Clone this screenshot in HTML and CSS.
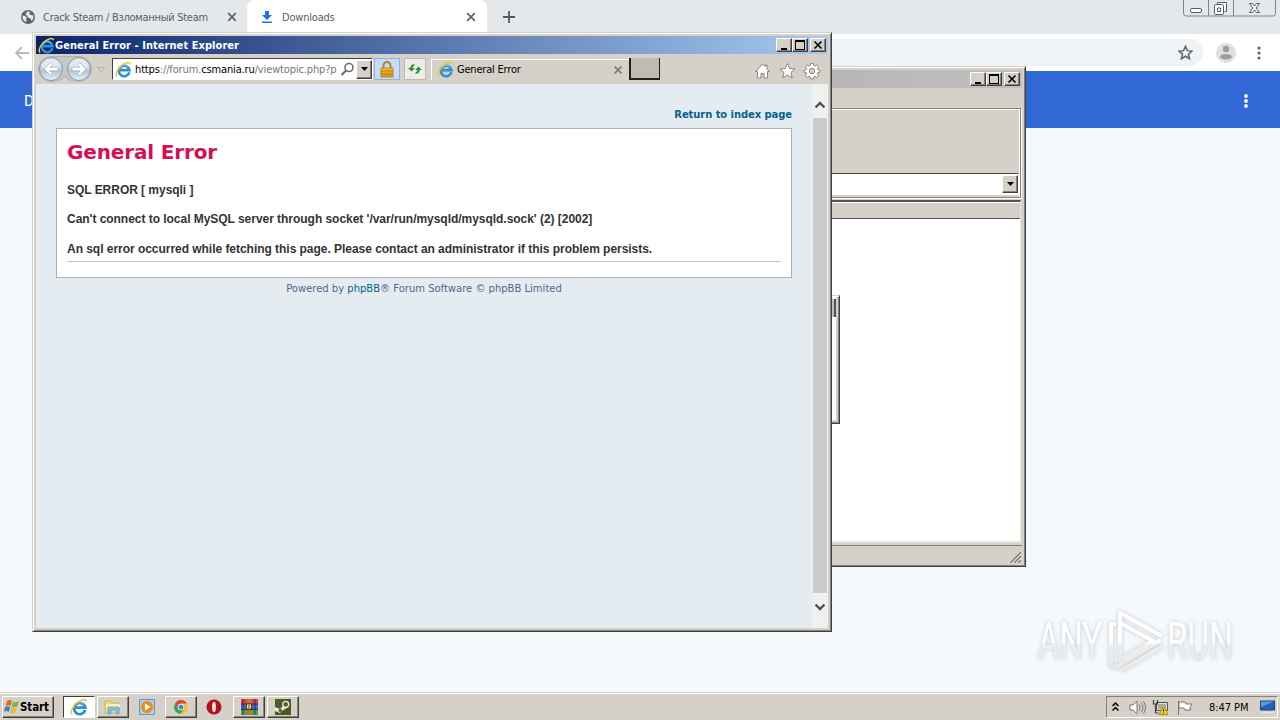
FILE: index.html
```
<!DOCTYPE html>
<html lang="en">
<head>
<meta charset="utf-8">
<title>Desktop</title>
<link rel="stylesheet" href="styles.css">
</head>
<body>
<svg class="defs" width="0" height="0">
  <defs>
    <linearGradient id="ball" x1="0" y1="0" x2="0" y2="1"><stop offset="0" stop-color="#dde2e8"/><stop offset=".45" stop-color="#c9d3dc"/><stop offset=".6" stop-color="#b2c5d2"/><stop offset="1" stop-color="#e4f8fd"/></linearGradient>
    <linearGradient id="gold" x1="0" y1="0" x2="0" y2="1"><stop offset="0" stop-color="#f5c044"/><stop offset="1" stop-color="#d8941e"/></linearGradient>
    <linearGradient id="mark" gradientUnits="userSpaceOnUse" x1="0" y1="6" x2="0" y2="66"><stop offset="0" stop-color="#fff"/><stop offset=".55" stop-color="#fdfefe"/><stop offset=".57" stop-color="#eceeef"/><stop offset="1" stop-color="#e6e8ea"/></linearGradient>
    <symbol id="ie" viewBox="0 0 16 16">
      <path d="M13.500 10.600A5 5 0 1 1 13.600 8.600H5" fill="none" stroke="#2f8fd6" stroke-width="2.500"/>
      <path d="M4 6.500A5 5 0 0 1 12.500 6" fill="none" stroke="#7fcdf4" stroke-width=".9"/>
      <path d="M2 14.700C-.5 12.500 3 6 8 3c3.600-2.200 6.500-2.200 6.500 0" fill="none" stroke="#f4c620" stroke-width="1.400"/>
    </symbol>
  </defs>
</svg>
<div class="desktop">
  <header class="tabs">
    <div class="tab first">
      <svg width="14" height="14" viewBox="0 0 14 14"><circle cx="7" cy="7" r="7" fill="#5f6368"/><path d="M1.500 5.500 4 6l2 2-1 1.500 .5 2.500C3 11.500 1 9 1.500 5.500zM6 1.500 9.500 2 8 4l2 1 2.400.5c.5 2-.4 4.500-2 5.500L9.500 8.500 7 7.500 6 5.500 4.500 5z" fill="#e4e8ea"/></svg>
      <span class="label crack">Crack Steam / Взломанный Steam</span>
      <svg class="close" width="10" height="10" viewBox="0 0 10 10"><path d="M1.200 1.200l7.600 7.600M8.800 1.200L1.200 8.800"/></svg>
    </div>
    <div class="tab active">
      <svg width="12" height="13" viewBox="0 0 12 13"><path d="M4 0h4v4h3L6 9 1 4h3zM1 10.500h10v1.500H1z" fill="#1a73e8"/></svg>
      <span class="label dl">Downloads</span>
      <svg class="close" width="10" height="10" viewBox="0 0 10 10"><path d="M1.200 1.200l7.600 7.600M8.800 1.200L1.200 8.800"/></svg>
    </div>
    <svg class="plus" width="12" height="12" viewBox="0 0 12 12"><path d="M6 0v12M0 6h12" stroke="#55595d" stroke-width="1.800"/></svg>
    <svg class="caption" width="94" height="18" viewBox="0 0 94 18" fill="none" stroke="#747a80">
      <path d="M.5 0v13q0 3 3 3h87q2 0 2-3V0M25.500 0v16M50.500 0v16" stroke="#81868a"/>
      <rect x="7.500" y="8.500" width="11" height="4" rx="1.500" stroke="#555b61" fill="#fff"/>
      <path d="M34.500 4.500V2.500h9v9h-2M31.500 5.500q0-1 1-1h7q1 0 1 1v8q0 1-1 1h-7q-1 0-1-1zM34.500 8h3v3.500h-3z" stroke="#555b61" fill="#fff"/>
      <path d="M66.500 3.500h3l2 2.500 2-2.500h3l-3.300 4.500 3.300 4.500h-3l-2-2.500-2 2.500h-3L69.800 8z" stroke="#555b61" fill="#fff"/>
    </svg>
  </header>
  <div class="omni">
    <svg width="14" height="14" viewBox="0 0 14 14"><path d="M14 7H1M7 1L1 7l6 6" fill="none" stroke="#b8babd" stroke-width="1.800"/></svg>
    <div class="url"><svg width="15" height="15" viewBox="0 0 24 24"><path d="M12 2l3 7 7.500.7-5.700 5 1.700 7.300L12 18l-6.500 4 1.700-7.300-5.700-5L9 9z" fill="none" stroke="#5f6368" stroke-width="2.400"/></svg></div>
    <svg class="person" width="20" height="20" viewBox="0 0 20 20"><circle cx="10" cy="10" r="10" fill="#dedfe0"/><circle cx="10" cy="6" r="3.200" fill="#9c9ea1"/><ellipse cx="10" cy="13.800" rx="6" ry="2.700" fill="#9c9ea1"/></svg>
    <svg class="kebab" width="4" height="14" viewBox="0 0 4 14" fill="#5f6368"><circle cx="2" cy="2" r="1.600"/><circle cx="2" cy="7" r="1.600"/><circle cx="2" cy="12" r="1.600"/></svg>
  </div>
  <div class="bluebar"><span>Downloads</span>
    <svg width="4" height="14" viewBox="0 0 4 14" fill="#fff"><circle cx="2" cy="2" r="1.900"/><circle cx="2" cy="7" r="1.900"/><circle cx="2" cy="12" r="1.900"/></svg>
  </div>
  <main class="wall"></main>
  <footer class="taskbar">
    <div class="start raised"><svg width="18" height="18" viewBox="0 0 18 18"><path d="M4 3q3-1.800 5 0L7.500 8q-2.500-1.500-5 0z" fill="#e4662a"/><path d="M10 3.500q3 1.500 6-.5l-1.600 5.200q-3 1.800-5.700.3z" fill="#80b73b"/><path d="M2.200 9q2.500-1.500 5 0L5.800 14q-2.300-1.700-5-.2z" fill="#3b7fd0"/><path d="M8.300 9.500q3 1.500 5.700-.3l-1.600 5.200q-2.700 1.700-5.500.1z" fill="#f0b82c"/></svg><b>Start</b></div>
    <div class="task pressed"><svg width="18" height="18"><use href="#ie"/></svg></div>
    <div class="task raised folder"><svg width="18" height="18" viewBox="0 0 18 18"><path d="M1 3h6l1 2h7v10H1z" fill="#f1d778" stroke="#cba84d" stroke-width=".7"/><path d="M2 6h14v4H2z" fill="#fff0a8"/><path d="M4 16V9h11v7h-3v-4H7v4z" fill="#79c3e8" stroke="#4b9cc9" stroke-width=".6"/></svg></div>
    <div class="bare media"><svg width="16" height="16" viewBox="0 0 16 16"><rect x=".5" y=".5" width="15" height="15" fill="#a8d0ec" stroke="#5b9bcf"/><circle cx="8" cy="8" r="6" fill="#f28b16"/><path d="M6 4.500l5.500 3.500L6 11.500z" fill="#fff"/></svg></div>
    <div class="task raised chrome"><svg width="14" height="14" viewBox="0 0 14 14"><circle cx="7" cy="7" r="7" fill="#f6c32b"/><path d="M1 3.400A7 7 0 0 1 13 3.500H7L4 8.500z" fill="#dd4937"/><path d="M1 3.400A7 7 0 0 0 6.500 14l3.200-5H4.200z" fill="#39a35a"/><circle cx="7" cy="7" r="3.200" fill="#fff"/><circle cx="7" cy="7" r="2.500" fill="#4588e8"/></svg></div>
    <div class="bare opera"><svg width="16" height="16" viewBox="0 0 16 16"><circle cx="8" cy="8" r="7.500" fill="#b60f18"/><ellipse cx="8" cy="8" rx="1.900" ry="5.300" fill="#f2e9e5"/></svg></div>
    <div class="task raised rar"><svg width="17" height="16" viewBox="0 0 17 16"><path d="M0 0h17v5H0z" fill="#d83a55"/><path d="M0 5h17v6H0z" fill="#3f66cc"/><path d="M0 11h17v5H0z" fill="#43a54e"/><path d="M5.500 0h5v16h-5z" fill="#bd7726"/><path d="M0 5h17M0 10.500h17M2 0v16M14 0v16" stroke="#37222e" stroke-width=".8"/><path d="M5.500 5h5v5h-5z" fill="#f4deb0" stroke="#5e3b18"/><path d="M8 6v3" stroke="#444"/></svg></div>
    <div class="task raised steam"><svg width="16" height="16" viewBox="0 0 16 16"><path d="M0 0h16v16H0z" fill="#4d5b24"/><path d="M0 8l5 2 4-4L13 8l-6 4-2 2-5-2z" fill="#e9ecdd"/><circle cx="10.700" cy="5.300" r="3" fill="#56642c" stroke="#e9ecdd" stroke-width="1.300"/><circle cx="5.300" cy="11.500" r="1.800" fill="#58652f"/></svg></div>
    <div class="tray">
      <svg width="7" height="10" viewBox="0 0 7 10"><path d="M.5 4l3-3 3 3M.5 8.500l3-3 3 3" fill="none" stroke="#000" stroke-width="1.500"/></svg>
      <svg class="speaker" width="17" height="15" viewBox="0 0 17 15" fill="#fff" stroke="#777"><path d="M1 5h3l4-4v13l-4-4H1z"/><path d="M10 4.500q2 3 0 6M12 2.500q4 5 0 10M14.500 1.500q4 6 0 12" fill="none"/></svg>
      <svg class="net" width="17" height="16" viewBox="0 0 17 16"><path d="M4.500 3.500h11v8h-11z" fill="#ddd" stroke="#555"/><path d="M6 5h8v5H6z" fill="#aaa8a0"/><path d="M1.500 1v4h4V1M3.500 5v9h3" fill="none" stroke="#444" stroke-width="1.200"/><path d="M11.500 7.500l4.500 8H7z" fill="#f5d21d" stroke="#b69200"/><path d="M11.500 10v2.500M11.500 13.500v1" stroke="#222"/></svg>
      <svg class="flag" width="16" height="15" viewBox="0 0 16 15"><path d="M1.500 1v14M2 2h6l1 2h6l-2 4 1 2H8L7 8H2z" fill="#fff" stroke="#777"/></svg>
      <span class="time">8:47 PM</span>
      <svg class="mon" width="15" height="14" viewBox="0 0 15 14"><path d="M.5 1h14v9H.5z" fill="#1f62ba" stroke="#1b416f"/><path d="M1 1.500h13L1 7z" fill="#5c9be2"/><path d="M1 12h10l3-1v2H1z" fill="#d9eaf6"/></svg>
    </div>
  </footer>

  <section class="win back">
    <div class="titlebar grey"><div class="btns">
      <i class="raised"><svg width="12" height="10" viewBox="0 0 12 10"><path d="M3 8h6v2H3z"/></svg></i><i class="raised"><svg width="12" height="10" viewBox="0 0 12 10"><path d="M1 0h10v10H1zM2 2v7h8V2z" fill-rule="evenodd"/></svg></i><i class="raised x"><svg width="12" height="10" viewBox="0 0 12 10"><path d="M2.500 1.500l7 7M9.500 1.500l-7 7" stroke="#000" stroke-width="1.700"/></svg></i>
    </div></div>
    <div class="menu"></div>
    <div class="rebar"><div class="combo"><i class="raised"><svg width="7" height="4"><path d="M0 0h7L3.500 4z"/></svg></i></div></div>
    <div class="list"><div class="head"></div></div>
    <div class="status"><svg width="13" height="13" viewBox="0 0 13 13"><path d="M1 13L13 1M5 13l8-8M9 13l4-4" stroke="#fff"/><path d="M2 13L13 2M6 13l7-7M10 13l3-3" stroke="#77736d" stroke-width="1.400"/></svg></div>
  </section>
  <section class="peek"><i></i></section>

  <section class="win front">
    <div class="titlebar blue"><svg width="17" height="17"><use href="#ie"/></svg><b class="ttl">General Error - Internet Explorer</b><div class="btns">
      <i class="raised"><svg width="12" height="10" viewBox="0 0 12 10"><path d="M3 8h6v2H3z"/></svg></i><i class="raised"><svg width="12" height="10" viewBox="0 0 12 10"><path d="M1 0h10v10H1zM2 2v7h8V2z" fill-rule="evenodd"/></svg></i><i class="raised x"><svg width="12" height="10" viewBox="0 0 12 10"><path d="M2.500 1.500l7 7M9.500 1.500l-7 7" stroke="#000" stroke-width="1.700"/></svg></i>
    </div></div>
    <div class="bar">
      <svg class="nav" width="70" height="28" viewBox="0 0 70 28"><path d="M15 1.500h28a12.500 12.500 0 0 1 0 25q-9 0-14-5-5 5-14 5a12.500 12.500 0 0 1 0-25z" fill="#c9c7c5" stroke="#b5b2ae"/><circle cx="15" cy="14" r="11.500" fill="url(#ball)" stroke="#8897a5"/><circle cx="43" cy="14" r="11.500" fill="url(#ball)" stroke="#8897a5"/><path d="M5 12q2-8 10-8t10 8q-10 3-20 0zM33 12q2-8 10-8t10 8q-10 3-20 0z" fill="#fff" opacity=".42"/><path d="M8 14l6.500-6.500 2 2-2.700 2.700h8.200v3.600h-8.200l2.700 2.700-2 2zM50 14l-6.500-6.500-2 2 2.700 2.700H36v3.600h8.200l-2.700 2.700 2 2z" fill="#fff" stroke="#94a8b5" stroke-width=".6"/><path d="M61.500 12.500h7l-3.500 4z" fill="#ddd9d2" stroke="#b0aaa2"/></svg>
      <div class="addr"><svg width="17" height="17"><use href="#ie"/></svg><span class="addrtext">https<em>://forum.</em>csmania.ru<em>/viewtopic.php?p</em></span><svg class="search" width="15" height="15" viewBox="0 0 15 15"><circle cx="9" cy="5.500" r="4" fill="none" stroke="#6e6e6e" stroke-width="1.600"/><path d="M6 8.500L1.500 13" stroke="#6e6e6e" stroke-width="2.200"/></svg><i class="raised"><svg width="7" height="4"><path d="M0 0h7L3.500 4z"/></svg></i></div>
      <div class="lock"><svg width="14" height="17" viewBox="0 0 14 17"><path d="M3.500 8V4.500a3.500 3.500 0 0 1 7 0V8" fill="none" stroke="#b78320" stroke-width="2"/><rect x="1" y="7" width="12" height="9" fill="url(#gold)" stroke="#c4861a"/><path d="M1 10h12M1 13h12" stroke="#a76a0b" stroke-width=".7"/></svg></div>
      <div class="refresh"><svg width="14" height="14" viewBox="0 0 14 14" fill="#2f9638"><path d="M0 6h2.300Q2.300 2.500 6.500 2v1.500Q4.700 4.200 4.700 6H7L3.500 9.500zM14 8h-2.300q0 3.500-4.200 4v-1.500Q9.300 9.800 9.300 8H7l3.500-3.500z"/></svg></div>
      <div class="ietab"><svg width="17" height="17"><use href="#ie"/></svg><span>General Error</span><svg class="tx" width="8" height="8" viewBox="0 0 8 8"><path d="M.5.5l7 7M7.500.5l-7 7" stroke="#817d78" stroke-width="1.700"/></svg></div>
      <div class="newtab"></div>
      <svg class="tools" width="68" height="18" viewBox="0 0 68 18" fill="#fff" stroke="#89857f"><path d="M1.500 9.500l7-7.500 2.500 2.500V3h2v4l2.500 2.500h-2V16h-3.500v-4.500H7V16H3.500V9.500z"/><path d="M33.500 1.500l2.200 5 5.300.5-4 3.500 1.200 5.500-4.700-3-4.700 3L30 10.500 26 7l5.300-.5z"/><g transform="translate(58 9)"><path d="M-1.300-7.500h2.600l.5 2.100 1.200.5L4.800-6l1.700 1.700-1.100 1.800.5 1.200 2.100.5v2l-2.100.5-.5 1.200 1.100 1.800L4.800 6.500 3 5.400l-1.200.5-.5 2.100h-2.600l-.5-2.100L-3 5.400-4.800 6.500-6.500 4.700-5.400 2.900l-.5-1.200L-8 1.200v-2l2.100-.5.5-1.200-1.100-1.800L-4.800-6-3-4.900l1.200-.5z"/><circle r="2.700" fill="#d5d1ca"/></g></svg>
    </div>
    <div class="view">
      <div class="page">
        <a class="ret">Return to index page</a>
        <article class="panel">
          <h1>General Error</h1>
          <p class="sql">SQL ERROR [ mysqli ]</p>
          <p>Can't connect to local MySQL server through socket '/var/run/mysqld/mysqld.sock' (2) [2002]</p>
          <p>An sql error occurred while fetching this page. Please contact an administrator if this problem persists.</p>
          <hr>
        </article>
        <div class="foot">Powered by <a>phpBB</a>® Forum Software © phpBB Limited</div>
      </div>
      <div class="scroll"><svg width="12" height="8" viewBox="0 0 12 8"><path d="M1.500 6.500L6 2l4.500 4.500"/></svg><div class="thumb"></div><svg width="12" height="8" viewBox="0 0 12 8"><path d="M1.500 1.500L6 6l4.500-4.500"/></svg></div>
    </div>
  </section>

  <svg class="anyrun" width="220" height="74" viewBox="0 0 220 74">
    <g fill="url(#mark)" font-size="51">
      <text x="7" y="55" textLength="64" lengthAdjust="spacingAndGlyphs">ANY</text>
      <text x="136" y="55" textLength="66" lengthAdjust="spacingAndGlyphs">RUN</text>
    </g>
    <g fill="none" stroke="url(#mark)" stroke-width="4" stroke-linejoin="round" stroke-linecap="round"><path d="M84 20h-4v42l5 1M89 52V9l40 22M89 19l33 18-33 19M128 37L87 62M130 43L91 66"/></g>
  </svg>
</div>
</body>
</html>
```
FILE: styles.css
```
* { box-sizing: border-box; }
body { margin: 0; font-family: "DejaVu Sans Condensed", "DejaVu Sans", sans-serif; font-size: 11px; color: #000; }
svg { display: block; flex: none; }
.defs { position: absolute; }
i { font-style: normal; display: block; }
.desktop { position: relative; width: 1280px; height: 720px; overflow: hidden; display: flex; flex-direction: column; background: #f6f9fc; }
.raised { background: #d5d1c9; border: 1px solid; border-color: #fff #404040 #404040 #fff; box-shadow: inset -1px -1px #87837c; }

.tabs { height: 34px; background: #e4e8eb; display: flex; align-items: center; }
.tab { height: 34px; display: flex; align-items: center; color: #5a5e62; }
.tab .label { white-space: nowrap; }
.tab.first { width: 247px; padding: 0 10px 0 21px; }
.crack { margin-left: 8px; letter-spacing: -0.28px; }
.close { margin-left: auto; fill: none; stroke: #5f6368; stroke-width: 1.7; }
.tab.active { width: 240px; background: #fff; border-radius: 8px 8px 0 0; padding: 0 11px 0 14px; }
.dl { margin-left: 9px; letter-spacing: -0.2px; }
.plus { margin-left: 16px; }
.caption { margin: 0 3px 0 auto; align-self: flex-start; }
.omni { height: 37px; background: #fff; display: flex; align-items: center; padding-left: 15px; }
.url { margin-left: 80px; width: 1094px; height: 27px; border-radius: 14px; background: #f0f3f5; display: flex; align-items: center; justify-content: flex-end; padding-right: 10px; }
.person { margin-left: 13px; }
.kebab { margin-left: 21px; }
.bluebar { height: 57px; background: #3267d6; display: flex; align-items: center; justify-content: space-between; padding: 2px 32px 0 24px; color: #fff; font: 15px Roboto, sans-serif; }
.wall { flex: 1; }

.taskbar { height: 28px; background: #d5d0c8; border-top: 1px solid #d5d0c8; box-shadow: inset 0 1px #fff; display: flex; padding: 3px 2px 2px; align-items: stretch; }
.start { width: 52px; display: flex; align-items: center; }
.start b { font-size: 11.5px; letter-spacing: -0.1px; margin-left: -1px; }
.task { width: 32px; display: flex; align-items: center; justify-content: center; margin-left: 3px; }
.pressed { margin-left: 9px; background: #fff; border: 1px solid; border-color: #404040 #fff #fff #404040; }
.task.folder { margin-left: 2px; }
.bare { display: flex; align-items: center; }
.media { margin-left: 10px; }
.task.chrome { margin-left: 10px; }
.opera { margin-left: 9px; }
.task.rar { margin-left: 11px; }
.task.steam { margin-left: 2px; }
.tray { margin-left: auto; width: 172px; border: 1px solid; border-color: #85817a #fff #fff #85817a; display: flex; align-items: center; padding-left: 5px; }
.speaker { margin-left: 10px; }
.net { margin-left: 6px; }
.flag { margin-left: 8px; }
.time { margin-left: 16px; width: 43px; white-space: nowrap; letter-spacing: -0.05px; }
.mon { margin-left: 8px; }

.win { position: absolute; background: #d5d0c8; border: 1px solid; border-color: #d5d0c8 #404040 #404040 #d5d0c8; box-shadow: inset 1px 1px #fff, inset -1px -1px #85817a; padding: 3px; display: flex; flex-direction: column; }
.titlebar { height: 18px; display: flex; align-items: center; padding-right: 2px; flex: none; }
.btns { margin-left: auto; display: flex; }
.btns i { width: 16px; height: 14px; padding: 1px; }
.btns .x { margin-left: 2px; }
.grey { background: linear-gradient(90deg, #b0b0b0, #c0c0c0); }
.blue { background: linear-gradient(90deg, #0a246a, #a6caf0); color: #fff; padding-left: 2px; }
.ttl { white-space: nowrap; letter-spacing: 0.06px; }

.back { left: 700px; top: 66px; width: 326px; height: 501px; }
.menu { height: 20px; }
.rebar { height: 90px; margin-right: 1px; border: 1px solid #85817a; box-shadow: inset -1px 1px #fff, 1px 1px #fff; display: flex; align-items: flex-end; padding: 0 1px 2px 0; }
.combo { flex: 1; height: 22px; background: #fff; border: 1px solid; border-color: #404040 #fff #fff; display: flex; justify-content: flex-end; padding: 1px 0; }
.combo i { width: 16px; display: flex; align-items: center; justify-content: center; }
.list { flex: 1; margin: 2px 1px 2px 0; background: #fff; border-top: 2px solid #55524d; border-bottom: 2px solid #e9e6df; border-right: 1px solid #e9e6df; }
.head { height: 17px; background: #d5d0c8; border-top: 1px solid #fff; border-bottom: 1px solid #55524d; }
.status { height: 18px; border-top: 1px solid #85817a; display: flex; justify-content: flex-end; align-items: flex-end; padding-right: 1px; }
.peek { position: absolute; left: 780px; top: 295px; width: 60px; height: 129px; border: 1px solid; border-color: #d5d0c8 #404040 #404040; box-shadow: inset 0 1px #fff, inset -1px -1px #85817a, inset -3px -3px #d5d0c8; background: #fff; padding: 3px 3px 0 0; }
.peek i { height: 18px; background: #bebebe; border-right: 2px solid #55524d; }

.front { left: 32px; top: 32px; width: 800px; height: 600px; }
.bar { height: 30px; display: flex; align-items: center; flex: none; }
.addr { width: 261px; height: 22px; margin-left: 6px; border: 1px solid; border-color: #404040 #fff #fff #404040; background: #fff; display: flex; align-items: center; padding-left: 2px; }
.addrtext { width: 202px; margin-left: 3px; overflow: hidden; white-space: nowrap; letter-spacing: -0.14px; }
.addrtext em { font-style: normal; color: #777; }
.search { margin-left: 3px; margin-right: 1px; }
.addr i { flex: 1; height: 19px; display: flex; align-items: center; justify-content: center; }
.lock { width: 26px; height: 22px; margin-left: 1px; background: #c8dcf8; border: 1px solid #8db4e8; display: flex; justify-content: center; align-items: center; }
.refresh { width: 22px; height: 22px; margin-left: 4px; background: #eeede9; border: 1px solid #bdb9b3; display: flex; align-items: center; justify-content: center; }
.ietab { width: 198px; height: 21px; margin-left: 5px; border-top: 1px solid #fff; border-left: 1px solid #fff; display: flex; align-items: center; padding: 0 7px 0 5px; white-space: nowrap; }
.ietab span { margin-left: 3px; letter-spacing: -0.2px; }
.tx { margin-left: auto; }
.newtab { width: 31px; height: 22px; background: #bfbab2; border: solid #202020; border-width: 0 1px 2px 2px; }
.tools { margin-left: 94px; margin-top: 3px; }

.view { flex: 1; display: flex; background: #e4ecf1; }
.page { flex: 1; padding: 23px 20px 0; display: flex; flex-direction: column; font-family: "DejaVu Sans", sans-serif; }
.ret { font-weight: bold; font-size: 10px; line-height: 16px; letter-spacing: -0.08px; color: #07618c; align-self: flex-end; white-space: nowrap; }
.panel { margin-top: 5px; height: 150px; background: #fff; border: 1px solid #a9b3ba; padding: 0 10px; display: flex; flex-direction: column; }
.panel h1 { margin: 8px 0 13px; font-size: 20px; line-height: 30px; letter-spacing: -0.15px; color: #d60e55; }
.panel p { margin: 0 0 10px; font: bold 12px/20px "Liberation Sans", sans-serif; letter-spacing: -0.035px; color: #333; white-space: nowrap; }
.panel .sql { margin-bottom: 9px; }
.panel p:last-of-type { margin: 0 0 2px; }
.panel hr { margin: 0; border: 0; border-top: 1px solid #c2c6c9; width: 100%; }
.foot { padding-top: 1px; font-size: 10px; line-height: 20px; color: #55668c; text-align: center; white-space: nowrap; }
.foot a { color: #07618c; }
.scroll { width: 16px; background: #f0f0f0; display: flex; flex-direction: column; align-items: center; padding: 17px 0; }
.scroll svg { fill: none; stroke: #505050; stroke-width: 2.4; }
.thumb { flex: 1; width: 14px; margin: 9px 0 10px; background: #cbcbcb; }
.anyrun { position: absolute; left: 1031px; top: 604px; filter: drop-shadow(0 0 2px #c6c9cc); font-family: Roboto, sans-serif; }
```
